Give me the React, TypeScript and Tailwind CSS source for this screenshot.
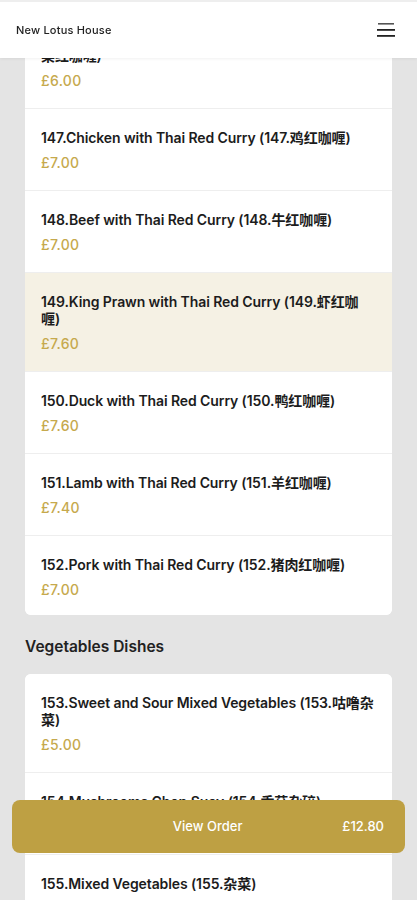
import React from "react";

type Item = { name: string; price: string; hl?: boolean };

const curry: Item[] = [
  { name: "146.Mixed Vegetables with Thai Red Curry (146.杂菜红咖喱)", price: "£6.00" },
  { name: "147.Chicken with Thai Red Curry (147.鸡红咖喱)", price: "£7.00" },
  { name: "148.Beef with Thai Red Curry (148.牛红咖喱)", price: "£7.00" },
  { name: "149.King Prawn with Thai Red Curry (149.虾红咖喱)", price: "£7.60", hl: true },
  { name: "150.Duck with Thai Red Curry (150.鸭红咖喱)", price: "£7.60" },
  { name: "151.Lamb with Thai Red Curry (151.羊红咖喱)", price: "£7.40" },
  { name: "152.Pork with Thai Red Curry (152.猪肉红咖喱)", price: "£7.00" },
];

const veg: Item[] = [
  { name: "153.Sweet and Sour Mixed Vegetables (153.咕噜杂菜)", price: "£5.00" },
  { name: "154.Mushrooms Chop Suey (154.香菇杂碎)", price: "£5.00" },
  { name: "155.Mixed Vegetables (155.杂菜)", price: "£5.00" },
  { name: "156.Bean Sprouts (156.炒芽菜)", price: "£4.50" },
];

function Row({ item, last }: { item: Item; last: boolean }) {
  return (
    <div
      className={`px-4 pt-5 ${item.hl ? "bg-[#f5f1e4]" : "bg-white"} ${
        last ? "pb-[17px]" : "pb-[19px] border-b border-[#eeeeee]"
      }`}
    >
      <div className="text-[14px] leading-[17px] font-semibold text-[#1c1c1c] tracking-[-0.1px]">{item.name}</div>
      <div className="mt-2 text-[14px] leading-[17px] font-medium text-[#c6a94d] tracking-[0.3px]">{item.price}</div>
    </div>
  );
}

function Card({ items }: { items: Item[] }) {
  return (
    <div className="bg-white rounded-[6px] overflow-hidden">
      {items.map((it, i) => (
        <Row key={it.name} item={it} last={i === items.length - 1} />
      ))}
    </div>
  );
}

export default function App() {
  return (
    <div
      className="min-h-screen bg-[#e4e4e4]"
      style={{ fontFamily: "Inter, 'Noto Sans CJK SC', sans-serif" }}
    >
      <header className="fixed top-0 left-0 right-0 z-10 h-[58px] bg-white border-t-2 border-[#eeeeee] shadow-[0_1px_3px_rgba(0,0,0,0.06)] flex items-center justify-between pl-4 pr-[22px]">
        <span className="text-[11px] font-medium text-[#222] tracking-[0.2px]">New Lotus House</span>
        <svg width="18" height="16" viewBox="0 0 18 16">
          <rect x="1" y="1" width="16" height="1.6" fill="#555" />
          <rect x="0" y="7" width="18" height="1.8" fill="#222" />
          <rect x="0" y="13" width="18" height="1.8" fill="#222" />
        </svg>
      </header>

      <main className="px-[25px] pt-[10px] pb-[120px]">
        <Card items={curry} />
        <h2 className="mt-[22px] mb-[17px] text-[15.5px] leading-5 font-semibold text-[#222]">Vegetables Dishes</h2>
        <Card items={veg} />
      </main>

      <div className="fixed left-3 right-3 bottom-[47px] z-20 h-[53px] rounded-[8px] bg-[#bea043] flex items-center px-[21px] text-white text-[13px] font-medium">
        <span className="flex-1 text-center pl-[40px]">View Order</span>
        <span>£12.80</span>
      </div>
    </div>
  );
}
